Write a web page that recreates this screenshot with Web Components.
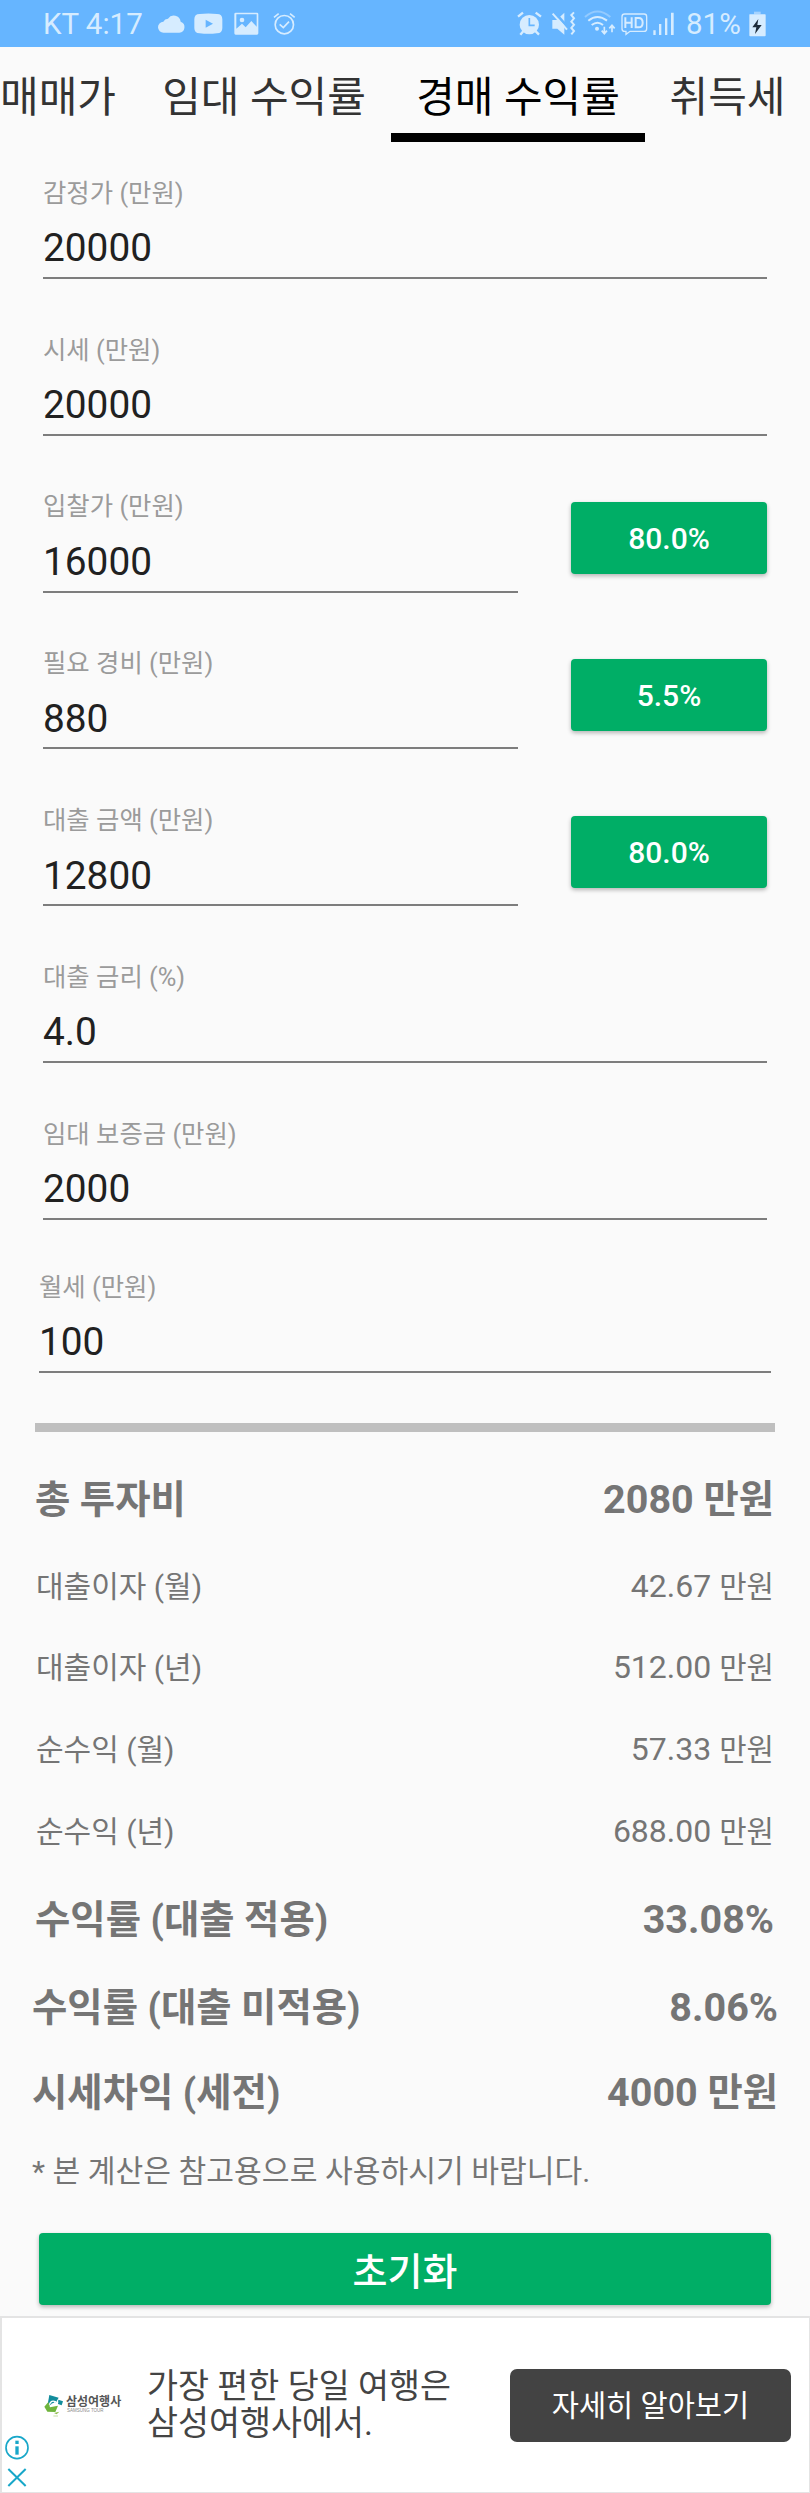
<!DOCTYPE html>
<html lang="ko">
<head>
<meta charset="utf-8">
<title>경매 수익률</title>
<style>
body {
    margin: 0;
    background: #fafafa;
    font-family: Roboto, "Noto Sans CJK KR", sans-serif;
}
</style>
</head>
<body>
<auction-app></auction-app>

<script>
function define(name, html) {
    const template = document.createElement('template');
    template.innerHTML = html;
    customElements.define(name, class extends HTMLElement {
        constructor() {
            super();
            this.attachShadow({ mode: 'open' }).appendChild(template.content.cloneNode(true));
        }
    });
}

define('status-bar', `
<style>
:host {
    display: flex;
    align-items: center;
    box-sizing: border-box;
    height: 47px;
    padding: 1px 44px 0 43px;
    background: #66b5ff;
    color: #d6ecff;
    font-size: 29.5px;
    line-height: 46px;
    white-space: nowrap;
}
svg { display: block; flex: none; }
.carrier { width: 113.600px; }
.right { margin-left: auto; }
.percent { width: 63px; margin-left: 10px; }
</style>
<span class="carrier">KT 4:17</span>
<svg class="left" width="140" height="30" viewBox="470 25 420 90" fill="#d6ecff">
    <path d="M490 96a16 16 0 0 1-1-33 17 17 0 0 1 14-9 21 21 0 0 1 38 9 17 17 0 0 1-4 33z"/>
    <path fill-rule="evenodd" d="M598 40q26-3 52 0 16 0 16 16v26q0 16-16 16-26 3-52 0-16 0-16-16V56q0-16 16-16zM616 57v24l22-12z"/>
    <path fill-rule="evenodd" d="M706 36h64q4 0 4 4v58q0 4-4 4h-64q-4 0-4-4V40q0-4 4-4zM708 41v43l17-15 11 11 17-19 16 17V41z"/>
    <circle cx="725" cy="58" r="7"/>
    <g fill="none" stroke="#d6ecff" stroke-width="5">
        <circle cx="852" cy="72" r="27.500"/>
        <path d="M838 71l11 10 17-18M821 50l14-11M869 39l14 11"/>
    </g>
</svg>
<svg class="right" width="160" height="30" viewBox="335 25 480 90" fill="#d6ecff">
    <circle cx="375" cy="72" r="29"/>
    <g fill="none" stroke="#d6ecff" stroke-width="7">
        <path d="M341 48l15-12M394 36l16 12M358 90l-10 12M392 90l12 12"/>
    </g>
    <path d="M375 52v22h16" fill="none" stroke="#66b5ff" stroke-width="5"/>
    <path d="M444 58h13L480 36v66L459 84h-15z"/>
    <path d="M450 34l44 50" stroke="#66b5ff" stroke-width="8"/>
    <path d="M445 39l43 48" stroke="#d6ecff" stroke-width="6"/>
    <path d="M509 35l-8 8 8 10-8 10 8 9-8 10 8 9-8 10" fill="none" stroke="#d6ecff" stroke-width="6"/>
    <g fill="none" stroke="#d6ecff" stroke-width="6">
        <path d="M542 49q37-33 76 0" opacity=".4"/>
        <path d="M552 60q27-22 56 0M562 73q18-14 34 0"/>
        <path d="M600 78v20M592 90l8 9 8-9M623 95V75M615 83l8-9 8 9" stroke-width="5"/>
    </g>
    <circle cx="578" cy="84" r="6"/>
    <g fill="none" stroke="#d6ecff" stroke-width="4">
        <path d="M661 40h58q8 0 8 8v36q0 8-8 8h-42l-12 9v-9h-4q-8 0-8-8V48q0-8 8-8z"/>
        <path d="M663 50v32M682 50v32M663 66h19M694 52v28h9q12 0 12-14t-12-14z" stroke-width="6"/>
    </g>
    <path d="M747 89h7v14h-7zM764 70h7v33h-7zM782 53h7v50h-7zM800 36h8v67h-8z"/>
</svg>
<span class="percent">81%</span>
<svg width="17" height="26" viewBox="1034 30 51 78">
    <path d="M1049 32h20v8h-20z" fill="#a5d3ff"/>
    <path d="M1036 40h46q2 0 2 2v61q0 3-3 3h-43q-3 0-3-3V42q0-2 1-2z" fill="#d6ecff"/>
    <path d="M1062 54l-18 25h12l-4 20 20-27h-13z" fill="#1d2c3b"/>
</svg>
`);

define('tab-item', `
<style>
:host {
    display: flex;
    flex: none;
    flex-direction: column;
    justify-content: flex-end;
    box-sizing: border-box;
    height: 95px;
    color: #333;
    font-size: 42px;
    line-height: 50px;
    text-align: center;
    white-space: nowrap;
}
.bar { height: 8.600px; margin-top: 10px; }
:host([selected]) { color: #000; }
:host([selected]) .bar { background: #000; }
</style>
<slot></slot>
<div class="bar"></div>
`);

define('tab-strip', `
<style>
:host { display: flex; height: 95px; overflow: hidden; }
</style>
<slot></slot>
`);

define('green-button', `
<style>
:host { display: block; }
button {
    display: block;
    width: 100%;
    height: 72px;
    padding: var(--button-shift, 3px) 0 0;
    border: 0;
    border-radius: 4px;
    background: #00ae66;
    box-shadow: 0 2px 4px rgba(0, 0, 0, .28);
    color: #fff;
    font: 500 30px/40px Roboto, "Noto Sans CJK KR", sans-serif;
    font-size: var(--button-size, 30px);
}
</style>
<button><slot></slot></button>
`);

define('money-field', `
<style>
:host {
    display: flex;
    box-sizing: border-box;
    height: 156.800px;
    padding: 20.800px 43px 0;
}
:host([wide]) { padding: 17px 39px 0; height: 168.400px; }
.box { flex: 1; }
.label {
    color: #9b9b9b;
    font-size: 25.400px;
    line-height: 30px;
    white-space: nowrap;
}
.value {
    margin-top: 17.700px;
    padding-bottom: 5.600px;
    border-bottom: 2px solid #7d7d7d;
    color: #212121;
    font-size: 38.800px;
    line-height: 46px;
}
::slotted(green-button) {
    width: 196px;
    margin: 10.600px 0 0 53px;
}
</style>
<div class="box">
    <div class="label"><slot name="label"></slot></div>
    <div class="value"><slot></slot></div>
</div>
<slot name="action"></slot>
`);

define('result-row', `
<style>
:host {
    display: flex;
    justify-content: space-between;
    align-items: baseline;
    height: 81.700px;
    padding: 0 36px;
    color: #757575;
    font-size: 32px;
    line-height: 81.700px;
    white-space: nowrap;
}
.name { font-size: 30px; }
::slotted(small) { font-size: 29.800px; }
:host([strong]) { font-weight: 700; font-size: 39.500px; padding: 0 36px 0 35px; }
:host([strong]) .name { font-size: 38.400px; }
:host([strong]) ::slotted(small) { font-size: 38.300px; }
:host([strong][wide]) { padding: 0 32px; }
</style>
<span class="name"><slot name="name"></slot></span>
<span><slot></slot></span>
`);

define('ad-banner', `
<style>
:host {
    display: flex;
    align-items: center;
    box-sizing: border-box;
    height: 176.500px;
    border: solid #e4e4e4;
    border-width: 2px 1px 1px 2px;
    background: #fff;
    color: #444;
}
.marks {
    display: flex;
    flex-direction: column;
    align-self: flex-end;
    width: 30px;
    padding: 0 0 5px 3px;
    box-sizing: border-box;
}
svg { display: block; }
.logo {
    display: flex;
    width: 103px;
    align-items: flex-start;
    margin-left: 12px;
}
.brand {
    margin-left: 2px;
    color: #555;
    font: 700 12px/14px "Noto Sans CJK KR", sans-serif;
    white-space: nowrap;
}
.brand span {
    display: block;
    color: #888;
    font: 4.500px/6px "Liberation Sans", sans-serif;
    padding-left: 1px;
}
p {
    flex: 1;
    margin: 0;
    font-size: 33.700px;
    line-height: 37.300px;
    white-space: nowrap;
}
.cta {
    width: 281px;
    height: 73px;
    margin-right: 18px;
    border-radius: 7px;
    background: #434343;
    color: #fff;
    font-size: 29.500px;
    line-height: 74px;
    text-align: center;
}
</style>
<div class="marks">
    <svg width="24" height="52" viewBox="0 0 72 156" fill="none" stroke="#18a7c9" stroke-width="5">
        <circle cx="36" cy="38" r="33"/>
        <path d="M36 34v25" stroke-width="10"/>
        <path d="M36 17v10" stroke-width="10"/>
        <path d="M10 102l52 51M62 102l-52 51" stroke-width="6"/>
    </svg>
</div>
<div class="logo">
    <svg width="20" height="23" viewBox="0 0 60 69">
        <path d="M16 3l28 8-8 14-26 12z" fill="#138d9c"/>
        <path d="M1 38l12-14 5 16 24-5-8 19-24-1z" fill="#6fb43c"/>
        <path d="M43 17l14 5-4 12-11-4z" fill="#138d9c"/>
        <path d="M16 32q6-15 18-9-2 8-12 8 12 2 20-7" fill="none" stroke="#fff" stroke-width="4"/>
        <path d="M30 57l16-4-8 8zM28 65h14v2H28z" fill="#8dbb4a"/>
    </svg>
    <div class="brand">삼성여행사<span>SAMSUNG TOUR</span></div>
</div>
<p>가장 편한 당일 여행은<br>삼성여행사에서.</p>
<div class="cta">자세히 알아보기</div>
`);

define('auction-app', `
<style>
:host { display: block; width: 810px; height: 2493px; overflow: hidden; }
form { padding-top: 15px; }
hr { height: 9px; margin: 0 35px; border: 0; background: #bfbfbf; }
.results { padding-top: 27px; }
.total { margin-bottom: 5px; }
.rate { margin-top: 6.300px; }
.profit { margin-top: 3.300px; }
.note {
    padding: 0 32px;
    color: #757575;
    font-size: 30.200px;
    line-height: 40px;
    margin-top: 18.500px;
}
.reset { margin: 41.500px 39px 11px; --button-size: 38px; --button-shift: 6px; }
</style>
<status-bar></status-bar>
<tab-strip>
    <tab-item style="width: 116px; margin-right: 21px">매매가</tab-item>
    <tab-item style="width: 254px">임대 수익률</tab-item>
    <tab-item style="width: 254px" selected>경매 수익률</tab-item>
    <tab-item style="width: 165px">취득세</tab-item>
</tab-strip>
<form>
    <money-field><span slot="label">감정가 (만원)</span>20000</money-field>
    <money-field><span slot="label">시세 (만원)</span>20000</money-field>
    <money-field><span slot="label">입찰가 (만원)</span>16000<green-button slot="action">80.0%</green-button></money-field>
    <money-field><span slot="label">필요 경비 (만원)</span>880<green-button slot="action">5.5%</green-button></money-field>
    <money-field><span slot="label">대출 금액 (만원)</span>12800<green-button slot="action">80.0%</green-button></money-field>
    <money-field><span slot="label">대출 금리 (%)</span>4.0</money-field>
    <money-field><span slot="label">임대 보증금 (만원)</span>2000</money-field>
    <money-field wide><span slot="label">월세 (만원)</span>100</money-field>
</form>
<hr>
<div class="results">
    <result-row class="total" strong><span slot="name">총 투자비</span>2080 <small>만원</small></result-row>
    <result-row><span slot="name">대출이자 (월)</span>42.67 <small>만원</small></result-row>
    <result-row><span slot="name">대출이자 (년)</span>512.00 <small>만원</small></result-row>
    <result-row><span slot="name">순수익 (월)</span>57.33 <small>만원</small></result-row>
    <result-row><span slot="name">순수익 (년)</span>688.00 <small>만원</small></result-row>
    <result-row class="rate" strong><span slot="name">수익률 (대출 적용)</span>33.08%</result-row>
    <result-row class="rate" strong wide><span slot="name">수익률 (대출 미적용)</span>8.06%</result-row>
    <result-row class="profit" strong wide><span slot="name">시세차익 (세전)</span>4000 <small>만원</small></result-row>
</div>
<div class="note">* 본 계산은 참고용으로 사용하시기 바랍니다.</div>
<green-button class="reset">초기화</green-button>
<ad-banner></ad-banner>
`);
</script>
</body>
</html>
